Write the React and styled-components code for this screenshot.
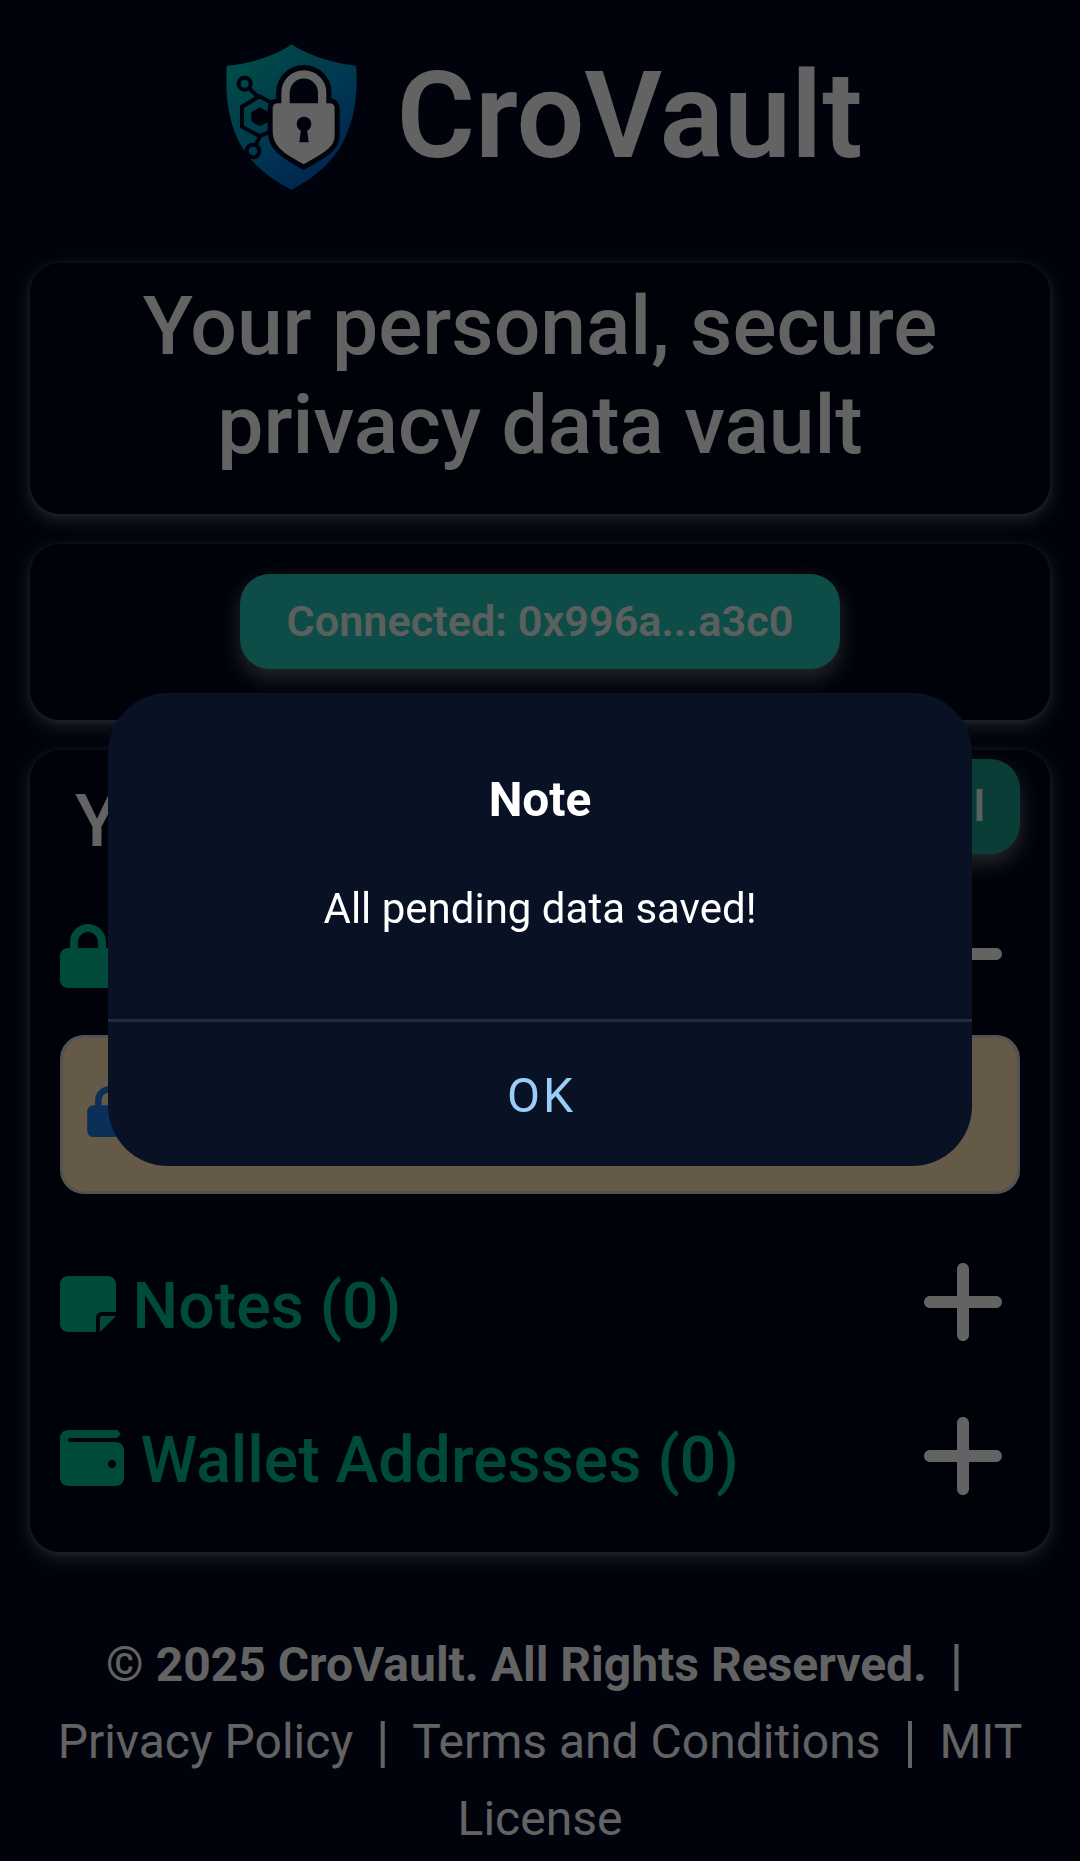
import React from "react";
import styled, { createGlobalStyle } from "styled-components";
import { FaLock, FaNoteSticky, FaWallet, FaPlus, FaMinus } from "react-icons/fa6";

const Global = createGlobalStyle`
  * { box-sizing: border-box; }
  body {
    margin: 0;
    background: #00071e;
    color: #f8f8f8;
    font-family: Roboto, "Liberation Sans", sans-serif;
    overflow: hidden;
  }
  h1, h2, h3, p { margin: 0; }
  button { font-family: inherit; border: 0; }
`;

const glow = `
  0 6px 18px rgba(255, 255, 255, 0.3),
  0 1px 6px rgba(255, 255, 255, 0.17)
`;

const Page = styled.div`
  height: 1861px;
  padding: 0 30px;
  overflow: hidden;
`;

const Header = styled.header`
  height: 263px;
  display: flex;
  justify-content: center;
  align-items: flex-start;
  gap: 39px;
  padding: 44px 0 0 9px;
`;

const Brand = styled.h1`
  padding-top: 2px;
  font-size: 120px;
  font-weight: 600;
  line-height: 140px;
`;

const Card = styled.section`
  height: ${(p) => p.$height}px;
  margin-bottom: 30px;
  border-radius: 30px;
  background: #000518;
  box-shadow: ${glow};
`;

const Tagline = styled.h2`
  padding-top: 14px;
  font-size: 82.2px;
  font-weight: 500;
  line-height: 98.6px;
  text-align: center;
`;

const ConnectRow = styled.div`
  display: flex;
  justify-content: center;
  padding-top: 30px;
`;

const PillButton = styled.button`
  width: ${(p) => p.$width}px;
  height: 95px;
  padding: 0 35px;
  border-radius: 30px;
  background: ${(p) => (p.$muted ? "rgb(25, 152, 140)" : "rgb(35, 190, 178)")};
  color: #e4eeec;
  font-size: 43.2px;
  font-weight: 600;
  text-align: ${(p) => (p.$muted ? "right" : "center")};
  white-space: nowrap;
  box-shadow: 0 9px 21px rgba(255, 255, 255, 0.38);
`;

const VaultHead = styled.div`
  display: flex;
  justify-content: space-between;
  align-items: flex-start;
  padding: 9px 30px 0 45px;
  height: 127px;
`;

const VaultTitle = styled.h2`
  padding-top: 21px;
  font-size: 72px;
  font-weight: 500;
  line-height: 84px;
`;

const SectionRow = styled.div`
  height: 154px;
  display: flex;
  justify-content: space-between;
  align-items: center;
  padding: 0 45px 0 30px;
`;

const SectionLabel = styled.h3`
  display: flex;
  align-items: center;
  gap: 16.5px;
  padding-top: 4px;
  color: #00b894;
  font-size: 64.4px;
  font-weight: 500;
  line-height: 76px;
  svg { display: block; height: 64px; width: ${(p) => p.$icon}px; }
  span { padding-top: 3px; }
`;

const Toggle = styled.button`
  padding: 0;
  background: none;
  color: #f8f8f8;
  svg { display: block; height: 96px; width: 84px; }
`;

const Entry = styled.div`
  height: 159px;
  margin: 4px 30px 31px;
  padding: 0 24px;
  display: flex;
  align-items: center;
  border: 3px solid #ccc;
  border-radius: 24px;
  background: #fcdfb2;
  color: #1a76dc;
  svg { display: block; height: 51px; width: 45px; margin-bottom: 7px; }
`;

const Footer = styled.footer`
  padding-top: 45px;
  font-size: 48px;
  line-height: 76.8px;
  text-align: center;
  white-space: pre;
`;

const FootLine = styled.p`
  height: 76.8px;
`;

const Bar = styled.span`
  display: inline-block;
  width: 59px;
  margin-right: ${(p) => (p.$last ? -12 : 0)}px;
  font-size: 55px;
  line-height: 60px;
  text-align: center;
  vertical-align: -3px;
`;

const Backdrop = styled.div`
  position: fixed;
  inset: 0;
  display: flex;
  align-items: center;
  justify-content: center;
  background: rgba(0, 0, 0, 0.6);
`;

const Dialog = styled.div`
  width: 864px;
  height: 473px;
  margin-bottom: 2px;
  border-radius: 60px;
  background: #091125;
  color: #fff;
  text-align: center;
  overflow: hidden;
`;

const DialogBody = styled.div`
  height: 326px;
  padding-top: 78px;
`;

const DialogTitle = styled.h2`
  font-size: 47.8px;
  font-weight: 700;
  line-height: 58px;
`;

const DialogText = styled.p`
  padding-top: 48px;
  font-size: 42px;
  line-height: 64px;
`;

const DialogAction = styled.button`
  display: block;
  width: 100%;
  height: 147px;
  padding: 2px 0 0 3px;
  border-top: 3px solid #242a3c;
  background: none;
  color: #9acdf7;
  font-size: 48px;
  letter-spacing: 3px;
`;

const Ink = "#00071e";

function Logo() {
  return (
    <svg width="131" height="146" viewBox="79 71 393 438" fill="none">
      <defs>
        <linearGradient id="shield" x1="140" y1="90" x2="400" y2="400" gradientUnits="userSpaceOnUse">
          <stop offset="0" stopColor="#00e0d4" stopOpacity="0.85" />
          <stop offset="0.35" stopColor="#00bcd0" stopOpacity="0.85" />
          <stop offset="0.65" stopColor="#0088cc" />
          <stop offset="1" stopColor="#0064c8" />
        </linearGradient>
      </defs>
      <path
        fill="url(#shield)"
        d="M275 72C320 102 400 130 468 136Q471 138 471 180C471 260 455 320 425 375C390 435 335 478 275 508C220 480 165 440 130 385C95 330 80 260 80 180Q80 138 82 136C160 130 235 102 275 72Z"
      />
      <g stroke={Ink} strokeWidth="12">
        <circle cx="135" cy="190" r="18" />
        <path d="M148 203L174 229M222 251L179 228L127 259V319L179 347L215 333M181 347L168 376" />
        <circle cx="160" cy="392" r="19" />
      </g>
      <path fill={Ink} d="M180 261L205 274V305L180 318L155 303V276Z" />
      <path fill={Ink} d="M262 252V215A50 50 0 0 1 362 215V252Z" />
      <g stroke={Ink} strokeLinejoin="round">
        <path strokeWidth="56" d="M257.5 260V217A55 55 0 0 1 367.5 217V260" />
        <path
          strokeWidth="30"
          d="M235 249H389Q405 249 405 265V345C405 382 372 398 312 432C252 398 219 380 219 330V265Q219 249 235 249Z"
        />
      </g>
      <path stroke="#f8f8f8" strokeWidth="25" d="M257.5 254V217A55 55 0 0 1 367.5 217V254" />
      <path
        fill="#f8f8f8"
        d="M235 249H389Q405 249 405 265V345C405 382 372 398 312 432C252 398 219 380 219 330V265Q219 249 235 249Z"
      />
      <circle cx="313" cy="311" r="22" fill={Ink} />
      <path fill={Ink} d="M304 325H322L327 366H299Z" />
    </svg>
  );
}

function Section({ icon, iconWidth, label, open }) {
  return (
    <SectionRow>
      <SectionLabel $icon={iconWidth}>
        {icon}
        <span>{label}</span>
      </SectionLabel>
      <Toggle>{open ? <FaMinus /> : <FaPlus />}</Toggle>
    </SectionRow>
  );
}

export default function App() {
  return (
    <>
      <Global />
      <Page>
        <Header>
          <Logo />
          <Brand>CroVault</Brand>
        </Header>
        <Card $height={251}>
          <Tagline>
            Your personal, secure
            <br />
            privacy data vault
          </Tagline>
        </Card>
        <Card $height={176}>
          <ConnectRow>
            <PillButton $width={600}>Connected: 0x996a...a3c0</PillButton>
          </ConnectRow>
        </Card>
        <Card $height={802}>
          <VaultHead>
            <VaultTitle>Your Data</VaultTitle>
            <PillButton $width={233} $muted>Save All</PillButton>
          </VaultHead>
          <Section icon={<FaLock />} iconWidth={56} label="Logins (1)" open />
          <Entry>
            <FaLock />
          </Entry>
          <Section icon={<FaNoteSticky />} iconWidth={56} label="Notes (0)" />
          <Section icon={<FaWallet />} iconWidth={64} label="Wallet Addresses (0)" />
        </Card>
        <Footer>
          <FootLine>
            <b>© 2025 CroVault. All Rights Reserved.</b>
            <Bar $last>|</Bar>
          </FootLine>
          <FootLine>
            Privacy Policy<Bar>|</Bar>Terms and Conditions<Bar>|</Bar>MIT
          </FootLine>
          <FootLine>License</FootLine>
        </Footer>
      </Page>
      <Backdrop>
        <Dialog>
          <DialogBody>
            <DialogTitle>Note</DialogTitle>
            <DialogText>All pending data saved!</DialogText>
          </DialogBody>
          <DialogAction>OK</DialogAction>
        </Dialog>
      </Backdrop>
    </>
  );
}
